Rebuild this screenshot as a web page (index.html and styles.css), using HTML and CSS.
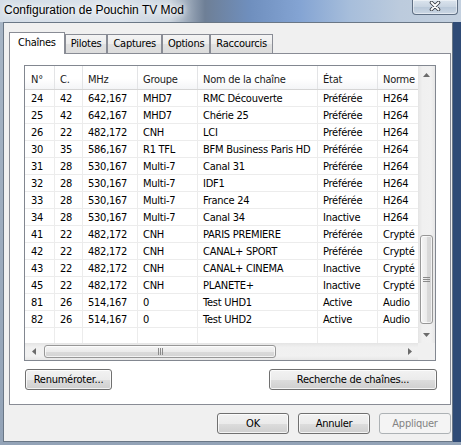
FILE: index.html
```html
<!DOCTYPE html>
<html lang="fr">
<head>
<meta charset="utf-8">
<title>Configuration de Pouchin TV Mod</title>
<link rel="stylesheet" href="styles.css">
</head>
<body>
<div class="window">
  <div class="titlebar">
    <span class="title">Configuration de Pouchin TV Mod</span>
    <div class="close">
      <svg width="12" height="10" viewBox="0 0 12 10">
        <path d="M2.5 1.5 L9.5 8.5 M9.5 1.5 L2.5 8.5" stroke="#3a3f46" stroke-width="3.6" stroke-linecap="round" fill="none"/>
        <path d="M2.5 1.5 L9.5 8.5 M9.5 1.5 L2.5 8.5" stroke="#ffffff" stroke-width="1.8" stroke-linecap="round" fill="none"/>
      </svg>
    </div>
  </div>
  <div class="client">
    <div class="tabs">
      <div class="tab sel">Chaînes</div>
      <div class="tab">Pilotes</div>
      <div class="tab">Captures</div>
      <div class="tab">Options</div>
      <div class="tab">Raccourcis</div>
    </div>
    <div class="page">
      <div class="list">
        <div class="list-top">
          <div class="grid">
            <div class="hdr"><span>N°</span><span>C.</span><span>MHz</span><span>Groupe</span><span>Nom de la chaîne</span><span>État</span><span>Norme</span></div>
            <div class="row"><span>24</span><span>42</span><span>642,167</span><span>MHD7</span><span>RMC Découverte</span><span>Préférée</span><span>H264</span></div>
            <div class="row"><span>25</span><span>42</span><span>642,167</span><span>MHD7</span><span>Chérie 25</span><span>Préférée</span><span>H264</span></div>
            <div class="row"><span>26</span><span>22</span><span>482,172</span><span>CNH</span><span>LCI</span><span>Préférée</span><span>H264</span></div>
            <div class="row"><span>30</span><span>35</span><span>586,167</span><span>R1 TFL</span><span>BFM Business Paris HD</span><span>Préférée</span><span>H264</span></div>
            <div class="row"><span>31</span><span>28</span><span>530,167</span><span>Multi-7</span><span>Canal 31</span><span>Préférée</span><span>H264</span></div>
            <div class="row"><span>32</span><span>28</span><span>530,167</span><span>Multi-7</span><span>IDF1</span><span>Préférée</span><span>H264</span></div>
            <div class="row"><span>33</span><span>28</span><span>530,167</span><span>Multi-7</span><span>France 24</span><span>Préférée</span><span>H264</span></div>
            <div class="row"><span>34</span><span>28</span><span>530,167</span><span>Multi-7</span><span>Canal 34</span><span>Inactive</span><span>H264</span></div>
            <div class="row"><span>41</span><span>22</span><span>482,172</span><span>CNH</span><span>PARIS PREMIERE</span><span>Préférée</span><span>Crypté</span></div>
            <div class="row"><span>42</span><span>22</span><span>482,172</span><span>CNH</span><span>CANAL+ SPORT</span><span>Préférée</span><span>Crypté</span></div>
            <div class="row"><span>43</span><span>22</span><span>482,172</span><span>CNH</span><span>CANAL+ CINEMA</span><span>Inactive</span><span>Crypté</span></div>
            <div class="row"><span>45</span><span>22</span><span>482,172</span><span>CNH</span><span>PLANETE+</span><span>Inactive</span><span>Crypté</span></div>
            <div class="row"><span>81</span><span>26</span><span>514,167</span><span>0</span><span>Test UHD1</span><span>Active</span><span>Audio</span></div>
            <div class="row"><span>82</span><span>26</span><span>514,167</span><span>0</span><span>Test UHD2</span><span>Active</span><span>Audio</span></div>
            <div class="row filler"><span></span><span></span><span></span><span></span><span></span><span></span><span></span></div>
          </div>
          <div class="vscroll">
            <div class="sb-btn">
              <svg width="7" height="4" viewBox="0 0 7 4"><polygon points="0,4 7,4 3.5,0" fill="#6b6b6b"/></svg>
            </div>
            <div class="vtrack">
              <div class="vthumb">
                <svg width="7" height="7" viewBox="0 0 7 7"><path d="M0 1.5h7M0 3.5h7M0 5.5h7" stroke="#8a8a8a" stroke-width="1"/></svg>
              </div>
            </div>
            <div class="sb-btn">
              <svg width="7" height="4" viewBox="0 0 7 4"><polygon points="0,0 7,0 3.5,4" fill="#6b6b6b"/></svg>
            </div>
          </div>
        </div>
        <div class="list-bottom">
          <div class="hscroll">
            <div class="sb-btn h">
              <svg width="4" height="7" viewBox="0 0 4 7"><polygon points="4,0 4,7 0,3.5" fill="#6b6b6b"/></svg>
            </div>
            <div class="htrack">
              <div class="hthumb">
                <svg width="7" height="7" viewBox="0 0 7 7"><path d="M1.5 0v7M3.5 0v7M5.5 0v7" stroke="#8a8a8a" stroke-width="1"/></svg>
              </div>
            </div>
            <div class="sb-btn h">
              <svg width="4" height="7" viewBox="0 0 4 7"><polygon points="0,0 0,7 4,3.5" fill="#6b6b6b"/></svg>
            </div>
          </div>
          <div class="corner"></div>
        </div>
      </div>
      <div class="page-buttons">
        <button class="btn btn-ren">Renuméroter...</button>
        <button class="btn btn-rech">Recherche de chaînes...</button>
      </div>
    </div>
    <div class="dlg-buttons">
      <button class="btn">OK</button>
      <button class="btn">Annuler</button>
      <button class="btn disabled">Appliquer</button>
    </div>
  </div>
</div>
</body>
</html>
```

FILE: styles.css
```css
* { box-sizing: border-box; }
html, body { margin: 0; padding: 0; }
body {
  width: 461px;
  height: 445px;
  overflow: hidden;
  font-family: "DejaVu Sans Condensed", "DejaVu Sans", sans-serif;
  font-stretch: condensed;
  font-size: 11px;
  letter-spacing: -0.25px;
  color: #000;
}

.window {
  width: 461px;
  height: 445px;
  display: flex;
  flex-direction: column;
  background:
    linear-gradient(90deg, #d4dde7 0px, #dae2eb 120px, #c9d3de 170px, #6e7f96 205px, #6f8fbe 250px, #84a4d3 300px, #a7bedb 350px, #bccbdd 400px, #c3d0df 461px) top / 100% 22px no-repeat,
    linear-gradient(#a7b5c5, #93a3b7);
}

.titlebar {
  height: 22px;
  display: flex;
  align-items: flex-start;
}
.title {
  font-family: "Liberation Sans", Arial, sans-serif;
  font-size: 12px;
  letter-spacing: 0;
  padding-left: 4px;
  line-height: 20px;
  color: #000;
  text-shadow: 0 0 5px #fff, 0 0 9px #fff, 0 0 14px #fff;
}
.close {
  margin-left: auto;
  margin-right: 3px;
  width: 46px;
  height: 15px;
  border: 1px solid #5f6f84;
  border-top: none;
  border-radius: 0 0 4px 4px;
  background: linear-gradient(#dbe4ee, #c8d4e1 50%, #b9c8d9 51%, #cbd7e4);
  box-shadow: inset 0 0 0 1px rgba(255, 255, 255, 0.45);
  display: flex;
  justify-content: center;
  padding-top: 1px;
}

.client {
  margin-left: 3px;
  width: 450px;
  height: 420px;
  border: 1px solid #6a7786;
  background: #f0f0f0;
  padding: 9px 1px 7px 5px;
  display: flex;
  flex-direction: column;
  box-shadow: 8px 0 0 #2f4b76;
}

.tabs {
  display: flex;
  height: 21px;
  align-items: flex-end;
  position: relative;
  z-index: 1;
}
.tab {
  height: 19px;
  padding: 0 5px;
  border: 1px solid #898c95;
  border-bottom: none;
  background: linear-gradient(#f4f4f4, #ececec 50%, #e1e1e1 51%, #dcdcdc);
  line-height: 18px;
  white-space: nowrap;
}
.tab.sel {
  height: 22px;
  margin-bottom: -1px;
  padding: 0 8px;
  background: #fff;
  line-height: 20px;
}

.page {
  height: 352px;
  border: 1px solid #898c95;
  background: #fff;
  padding: 11px 13px 14px 14px;
  display: flex;
  flex-direction: column;
  gap: 8px;
}

.list {
  width: 412px;
  height: 296px;
  border: 1px solid #828790;
  display: flex;
  flex-direction: column;
  background: #fff;
}
.list-top {
  display: flex;
  height: 277px;
}
.grid {
  width: 393px;
  overflow: hidden;
}
.hdr, .row {
  display: grid;
  grid-template-columns: 30px 28px 55px 60px 120px 60px 70px;
  width: 423px;
}
.hdr {
  height: 24px;
  border-bottom: 1px solid #d5d5d5;
  background: linear-gradient(#ffffff, #ffffff 55%, #f4f5f7);
}
.hdr span {
  border-right: 1px solid #e3e4e6;
  padding: 5px 0 0 5px;
  line-height: 17px;
  color: #1a1a1a;
  white-space: nowrap;
  overflow: hidden;
}
.row { height: 17px; }
.row span {
  border-right: 1px solid #ececec;
  border-bottom: 1px solid #ececec;
  padding-left: 5px;
  line-height: 17px;
  white-space: nowrap;
  overflow: hidden;
}
.hdr span:first-child, .row span:first-child { padding-left: 6px; }
.row.filler { height: 15px; }
.row.filler span { border-bottom: none; }

.vscroll {
  width: 17px;
  display: flex;
  flex-direction: column;
  background: linear-gradient(90deg, #e4e4e4, #f0f0f0 25%, #f1f1f1 75%, #e7e7e7);
}
.sb-btn {
  height: 17px;
  display: flex;
  align-items: center;
  justify-content: center;
  flex: none;
}
.sb-btn.h { width: 17px; height: auto; }
.vtrack {
  flex: 1;
  display: flex;
  flex-direction: column;
}
.vthumb {
  margin: 152px 2px 0 2px;
  height: 89px;
  border: 1px solid #979797;
  border-radius: 3px;
  background: linear-gradient(90deg, #f5f5f5, #ebebeb 50%, #dadada 51%, #d4d4d4);
  box-shadow: inset 0 0 0 1px rgba(255, 255, 255, 0.7);
  display: flex;
  align-items: center;
  justify-content: center;
}

.list-bottom {
  display: flex;
  height: 17px;
}
.hscroll {
  width: 393px;
  display: flex;
  background: linear-gradient(#e4e4e4, #f0f0f0 25%, #f1f1f1 75%, #e7e7e7);
}
.htrack {
  flex: 1;
  display: flex;
}
.hthumb {
  margin: 2px 0 2px 2px;
  width: 232px;
  border: 1px solid #979797;
  border-radius: 3px;
  background: linear-gradient(#f5f5f5, #ebebeb 50%, #dadada 51%, #d4d4d4);
  box-shadow: inset 0 0 0 1px rgba(255, 255, 255, 0.7);
  display: flex;
  align-items: center;
  justify-content: center;
}
.corner {
  width: 17px;
  background: #f0f0f0;
}

.btn {
  height: 21px;
  padding: 0;
  border: 1px solid #707070;
  border-radius: 3px;
  background: linear-gradient(#f2f2f2, #ebebeb 50%, #dddddd 51%, #cfcfcf);
  box-shadow: inset 0 0 0 1px rgba(255, 255, 255, 0.75);
  font: inherit;
  letter-spacing: inherit;
  color: #000;
  line-height: 19px;
  text-align: center;
}
.btn.disabled {
  border-color: #adb2b5;
  background: #f4f4f4;
  box-shadow: none;
  color: #838383;
}

.page-buttons {
  display: flex;
  justify-content: space-between;
  padding-left: 1px;
}
.btn-ren { width: 87px; }
.btn-rech { width: 168px; }

.dlg-buttons {
  display: flex;
  justify-content: flex-end;
  gap: 9px;
  margin-top: 8px;
}
.dlg-buttons .btn { width: 72px; }
```
